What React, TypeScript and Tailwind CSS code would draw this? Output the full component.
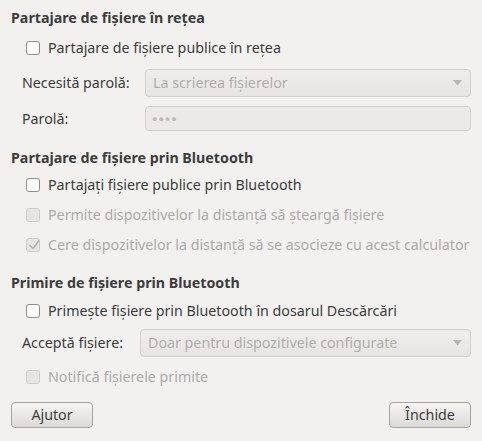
import React from "react";

const FONT = { fontFamily: '"Noto Sans", "Open Sans", sans-serif' };

function Check({ disabled = false, checked = false }: { disabled?: boolean; checked?: boolean }) {
  return (
    <span
      className={`relative inline-flex h-[14px] w-[14px] shrink-0 rounded-[3px] border ${
        disabled ? "border-[#cfcdca] bg-[#e6e5e3]" : "border-[#8f8d8a] bg-white"
      }`}
    >
      {checked && (
        <svg className="absolute left-[1px] top-[0px]" width="12" height="12" viewBox="0 0 12 12" fill="none">
          <path d="M2 6.5 L5 9.5 L10.5 2" stroke="#b2b0ad" strokeWidth="1.6" strokeLinecap="round" strokeLinejoin="round" />
        </svg>
      )}
    </span>
  );
}

function CheckRow({ label, disabled = false, checked = false, mt }: { label: string; disabled?: boolean; checked?: boolean; mt: string }) {
  return (
    <div className={`flex h-[20px] items-center gap-[8px] pl-[26px] ${mt}`}>
      <Check disabled={disabled} checked={checked} />
      <span className={disabled ? "text-[#ababa9]" : "text-[#3c3c3c]"}>{label}</span>
    </div>
  );
}

function Combo({ value }: { value: string }) {
  return (
    <div className="flex h-[28px] flex-1 items-center justify-between rounded-[4px] border border-[#d3d1ce] bg-gradient-to-b from-[#efeeed] to-[#e6e5e3] pl-[7px] pr-[8px] text-[#b0aeab]">
      <span>{value}</span>
      <svg width="9" height="6" viewBox="0 0 9 6">
        <path d="M0 0 H9 L4.5 5.5 Z" fill="#b9b7b4" />
      </svg>
    </div>
  );
}

function Heading({ text, mt }: { text: string; mt: string }) {
  return <div className={`flex h-[20px] items-center pl-[11px] font-bold text-[#3c3c3c] ${mt}`}>{text}</div>;
}

export default function App() {
  return (
    <div className="h-[441px] w-[482px] bg-[#f2f1f0] text-[14.25px] pt-[8px]" style={FONT}>
      <Heading text="Partajare de fișiere în rețea" mt="" />
      <CheckRow label="Partajare de fișiere publice în rețea" mt="mt-[10px]" />

      <div className="mt-[11px] flex items-center pl-[22px] pr-[11px] text-[#3c3c3c]">
        <span className="w-[123px]">Necesită parolă:</span>
        <Combo value="La scrierea fișierelor" />
      </div>

      <div className="mt-[9px] flex items-center pl-[22px] pr-[11px] text-[#3c3c3c]">
        <span className="w-[123px]">Parolă:</span>
        <div className="flex h-[25px] flex-1 items-center rounded-[4px] border border-[#d3d1ce] bg-[#ebeae9] pl-[6px] text-[9px] tracking-[1px] text-[#bdbbb8]">
          ●●●●
        </div>
      </div>

      <Heading text="Partajare de fișiere prin Bluetooth" mt="mt-[17px]" />
      <CheckRow label="Partajați fișiere publice prin Bluetooth" mt="mt-[7px]" />
      <CheckRow label="Permite dispozitivelor la distanță să șteargă fișiere" disabled mt="mt-[10px]" />
      <CheckRow label="Cere dispozitivelor la distanță să se asocieze cu acest calculator" disabled checked mt="mt-[10px]" />

      <Heading text="Primire de fișiere prin Bluetooth" mt="mt-[18px]" />
      <CheckRow label="Primește fișiere prin Bluetooth în dosarul Descărcări" mt="mt-[8px]" />

      <div className="mt-[8px] flex items-center pl-[22px] pr-[11px] text-[#3c3c3c]">
        <span className="w-[118px]">Acceptă fișiere:</span>
        <Combo value="Doar pentru dispozitivele configurate" />
      </div>

      <CheckRow label="Notifică fișierele primite" disabled mt="mt-[10px]" />

      <div className="mt-[15px] flex justify-between px-[11px]">
        <button className="h-[26px] w-[82px] rounded-[4px] border border-[#a6a4a1] bg-gradient-to-b from-[#f6f5f4] to-[#dcdad7] text-[#3c3c3c]">
          Ajutor
        </button>
        <button className="h-[26px] w-[82px] rounded-[4px] border border-[#a6a4a1] bg-gradient-to-b from-[#f6f5f4] to-[#dcdad7] text-[#3c3c3c]">
          Închide
        </button>
      </div>
    </div>
  );
}
